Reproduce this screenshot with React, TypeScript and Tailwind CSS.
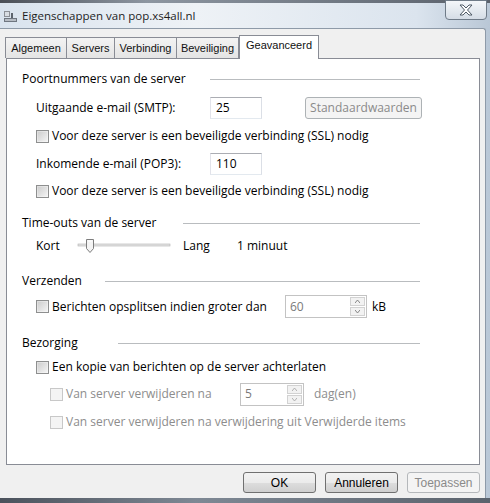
import React from 'react'

const ui = "font-['Open_Sans','Noto_Sans',sans-serif] text-[12px] text-black"
const classic = "font-['Liberation_Sans',Arial,sans-serif] text-[11px]"

function Checkbox({ label, disabled }: { label: string; disabled?: boolean }) {
  return (
    <div className="flex items-center h-[18px]">
      <span
        className={`w-[13px] h-[13px] border ${disabled ? 'border-[#c8c8c8] bg-[#f4f4f4]' : 'border-[#8e8f8f] bg-gradient-to-br from-[#dcdcdc] to-[#f8f8f8]'} flex items-center justify-center`}
      >
        <span className={`w-[9px] h-[9px] ${disabled ? 'bg-[#f4f4f4]' : 'bg-gradient-to-br from-[#cfcfcf] to-[#f2f2f2]'}`} />
      </span>
      <span className={`ml-[3px] leading-none ${disabled ? 'text-[#8d8d8d]' : ''}`}>{label}</span>
    </div>
  )
}

function Header({ label, textWidth }: { label: string; textWidth: string }) {
  return (
    <div className="flex items-center h-[18px] w-[398px]">
      <span className={`${textWidth} shrink-0 leading-none`}>{label}</span>
      <span className="flex-1 h-px bg-[#b9bcbf]" />
    </div>
  )
}

function Spinner({ value, width, disabled }: { value: string; width: string; disabled?: boolean }) {
  return (
    <div className={`${width} h-[23px] flex items-center border border-[#c3c3c3] bg-white`}>
      <span className="flex-1 pl-[4px] text-[#7a7a7a] leading-none">{value}</span>
      <div className="flex flex-col gap-px mr-[1px]">
        {['up', 'down'].map((d) => (
          <span key={d} className="w-[15px] h-[9px] border border-[#d2d2d2] bg-[#f2f2f2] flex items-center justify-center">
            <svg width="5" height="3" viewBox="0 0 5 3">
              <path d={d === 'up' ? 'M0 3 L2.5 0 L5 3' : 'M0 0 L2.5 3 L5 0'} fill="none" stroke={disabled ? '#a9a9a9' : '#7a7a7a'} strokeWidth="0.9" />
            </svg>
          </span>
        ))}
      </div>
    </div>
  )
}

function Button({ label, disabled, width }: { label: string; disabled?: boolean; width: string }) {
  return (
    <div
      className={`${width} h-[21px] rounded-[3px] border flex items-center justify-center font-['Liberation_Sans',Arial,sans-serif] text-[12px] ${
        disabled
          ? 'border-[#b5b8bb] bg-[#f4f4f4] text-[#8a8a8a]'
          : 'border-[#707070] bg-[linear-gradient(#f2f2f2_0%,#ebebeb_50%,#dddddd_51%,#cfcfcf_100%)] text-black'
      }`}
    >
      {label}
    </div>
  )
}

export default function App() {
  const tabs = [
    { t: 'Algemeen', w: 'w-[62px]' },
    { t: 'Servers', w: 'w-[49px]' },
    { t: 'Verbinding', w: 'w-[63px]' },
    { t: 'Beveiliging', w: 'w-[63px]' },
  ]

  return (
    <div className={`w-[490px] h-[503px] overflow-hidden flex flex-col bg-[linear-gradient(90deg,#d9e3ee,#eef2f6_40%,#dbe4ee_85%,#b9c7d6)] ${ui}`}>
      {/* strip of the window behind */}
      <div className="h-[3px] bg-[linear-gradient(90deg,#4a4f57,#8d96a1_30%,#5a616b)]" />

      {/* title bar */}
      <div className="h-[25px] flex items-center relative">
        <svg className="ml-[3px]" width="16" height="16" viewBox="0 0 16 16">
          <rect x="1" y="3" width="6" height="6" fill="#8b8f96" />
          <rect x="2" y="4" width="4" height="4" fill="#d8dde3" />
          <rect x="1" y="10" width="13" height="4" fill="#6f7680" />
          <rect x="2" y="11" width="11" height="2" fill="#b6bcc4" />
          <rect x="8" y="5" width="2" height="5" fill="#5d646d" />
        </svg>
        <span className="ml-[3px] text-[11.5px] text-[#1e1e1e]">Eigenschappen van pop.xs4all.nl</span>
        <div className="absolute right-[3px] top-[-3px] w-[42px] h-[20px] rounded-b-[4px] border border-[#6f7b88] bg-[linear-gradient(#f4f7fa,#d5dde6)] flex items-center justify-center">
          <svg width="14" height="12" viewBox="0 0 14 12">
            <path
              d="M1 1 H4 L7 4 L10 1 H13 L8.5 6 L13 11 H10 L7 8 L4 11 H1 L5.5 6 Z"
              fill="#ffffff"
              stroke="#4f5a66"
              strokeWidth="1"
              strokeLinejoin="round"
            />
          </svg>
        </div>
      </div>

      {/* dialog body */}
      <div className="flex-1 flex flex-col mr-[4px] bg-[#f0f0f0] border-t border-r border-[#8e9aa8] rounded-tr-[3px]">
        {/* tabs */}
        <div className={`flex items-end h-[29px] pl-[5px] ${classic}`}>
          {tabs.map(({ t, w }) => (
            <div
              key={t}
              className={`${w} h-[21px] -mr-px border border-b-0 border-[#898c95] bg-[linear-gradient(#f3f3f3,#e4e4e4)] flex items-center justify-center text-[#111] leading-none`}
            >
              {t}
            </div>
          ))}
          <div className="relative z-10 w-[80px] h-[24px] mb-[-1px] ml-[1px] border border-b-0 border-[#898c95] bg-white flex justify-center items-start pt-[4px] leading-none text-[#111]">
            Geavanceerd
          </div>
        </div>

        {/* panel */}
        <div className="ml-[6px] mr-[5px] h-[407px] border border-[#898c95] bg-white pl-[15px]">
          <div className="pt-[11px] flex flex-col">
            <Header label="Poortnummers van de server" textWidth="w-[188px]" />
            <div className="mt-[9px] ml-[14px] flex items-center h-[22px]">
              <span className="w-[174px]">Uitgaande e-mail (SMTP):</span>
              <div className="w-[52px] h-[22px] border border-[#abadb3] border-b-[#e3e9ef] border-l-[#e2e3ea] border-r-[#dbdfe6] bg-white flex items-center pl-[5px]">25</div>
              <div className="ml-[43px] w-[117px] h-[22px] rounded-[3px] border border-[#adb2b5] bg-[#f4f4f4] flex items-center justify-center text-[#8a8a8a]">
                Standaardwaarden
              </div>
            </div>
            <div className="mt-[8px] ml-[14px]">
              <Checkbox label="Voor deze server is een beveiligde verbinding (SSL) nodig" />
            </div>
            <div className="mt-[8px] ml-[14px] flex items-center h-[22px]">
              <span className="w-[174px]">Inkomende e-mail (POP3):</span>
              <div className="w-[52px] h-[22px] border border-[#abadb3] border-b-[#e3e9ef] border-l-[#e2e3ea] border-r-[#dbdfe6] bg-white flex items-center pl-[5px]">110</div>
            </div>
            <div className="mt-[7px] ml-[14px]">
              <Checkbox label="Voor deze server is een beveiligde verbinding (SSL) nodig" />
            </div>

            <div className="mt-[14px]">
              <Header label="Time-outs van de server" textWidth="w-[161px]" />
            </div>
            <div className="mt-[5px] ml-[14px] flex items-center h-[18px]">
              <span className="w-[41px]">Kort</span>
              <svg width="94" height="16" viewBox="0 0 94 16">
                <rect x="1" y="6" width="92" height="2" fill="#e6e6e6" stroke="#b0b0b0" strokeWidth="0.6" />
                <path d="M9.5 1.5 H16.5 V10.5 L13 14.5 L9.5 10.5 Z" fill="#f4f4f4" stroke="#7d7d7d" strokeWidth="1" />
                <path d="M11 3 H15" stroke="#ffffff" strokeWidth="1" />
              </svg>
              <span className="ml-[12px] w-[54px]">Lang</span>
              <span>1 minuut</span>
            </div>

            <div className="mt-[17px]">
              <Header label="Verzenden" textWidth="w-[83px]" />
            </div>
            <div className="mt-[5px] ml-[14px] flex items-center h-[23px]">
              <div className="w-[249px]">
                <Checkbox label="Berichten opsplitsen indien groter dan" />
              </div>
              <Spinner value="60" width="w-[82px]" />
              <span className="ml-[5px]">kB</span>
            </div>

            <div className="mt-[16px]">
              <Header label="Bezorging" textWidth="w-[96px]" />
            </div>
            <div className="mt-[6px] ml-[14px]">
              <Checkbox label="Een kopie van berichten op de server achterlaten" />
            </div>
            <div className="mt-[7px] ml-[28px] flex items-center h-[22px]">
              <div className="w-[190px]">
                <Checkbox label="Van server verwijderen na" disabled />
              </div>
              <Spinner value="5" width="w-[64px]" disabled />
              <span className="ml-[10px] text-[#8d8d8d]">dag(en)</span>
            </div>
            <div className="mt-[8px] ml-[28px]">
              <Checkbox label="Van server verwijderen na verwijdering uit Verwijderde items" disabled />
            </div>
          </div>
        </div>

        {/* buttons */}
        <div className="flex justify-end gap-[9px] mr-[5px] mt-[7px]">
          <Button label="OK" width="w-[73px]" />
          <Button label="Annuleren" width="w-[73px]" />
          <Button label="Toepassen" width="w-[73px]" disabled />
        </div>
      </div>
      <div className="h-[5px] bg-[linear-gradient(90deg,#4b525c,#7e8894_40%,#5b636d)]" />
    </div>
  )
}
